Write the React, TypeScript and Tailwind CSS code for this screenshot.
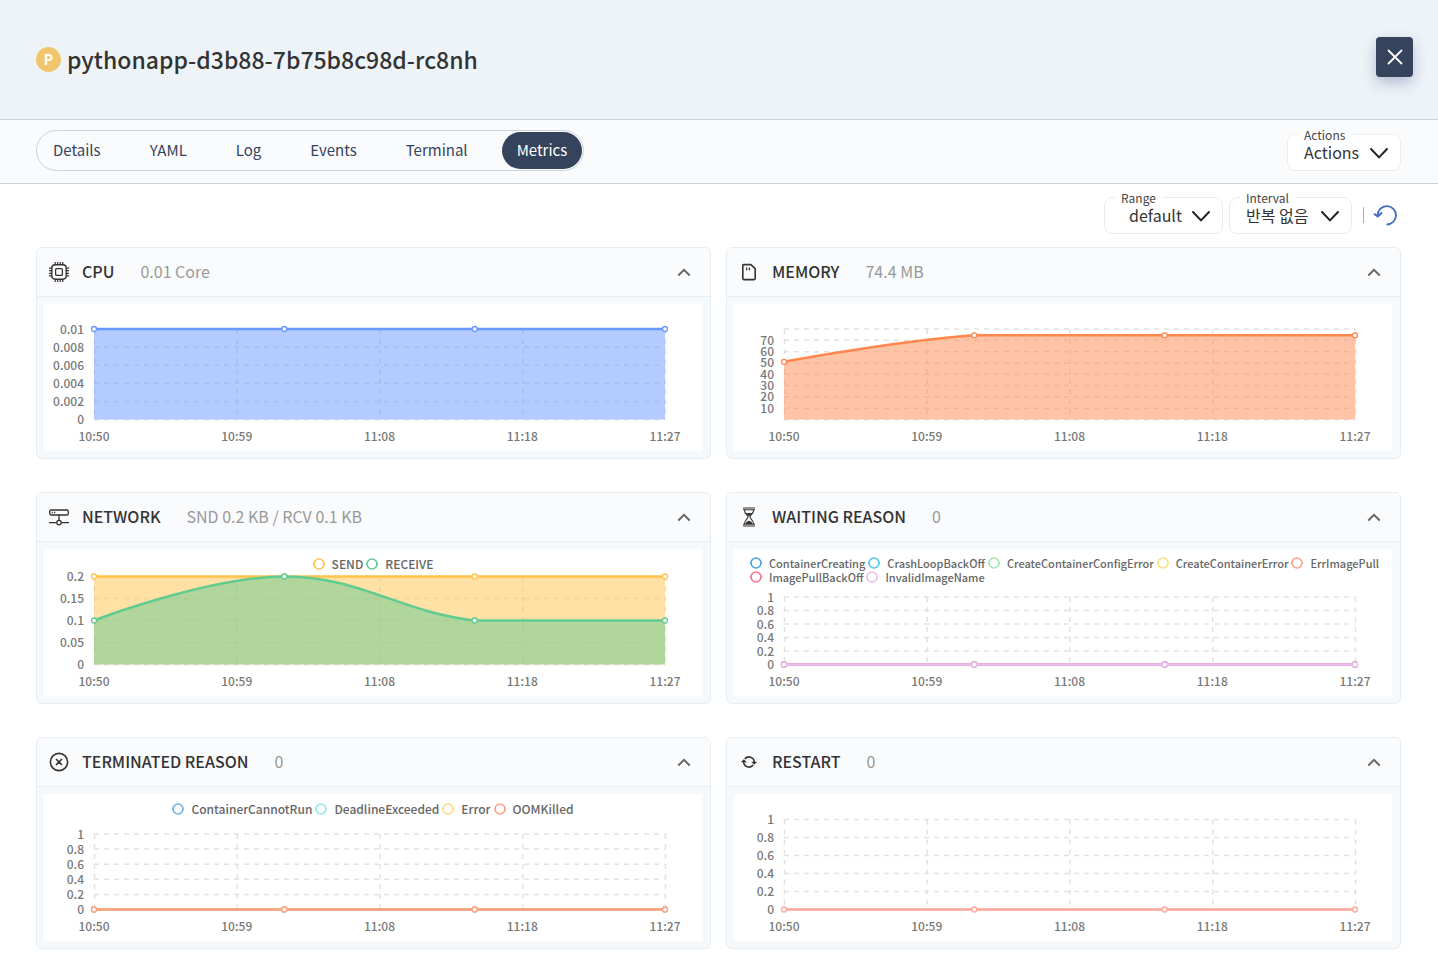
import type { ReactNode } from 'react';

type Point = [number, number];

interface Series {
  name: string;
  color: string;
  values: number[];
}

interface Metric {
  title: string;
  value: string;
  icon: ReactNode;
  series: Series[];
  ticks: string[];
  max: number;
  plotTop: number;
  legend?: 'single' | 'wrapped';
}

const TABS = ['Details', 'YAML', 'Log', 'Events', 'Terminal', 'Metrics'];
const TIMES = ['10:50', '10:59', '11:08', '11:18', '11:27'];
const ZERO = [0, 0, 0, 0];

const WIDTH = 658;
const HEIGHT = 147;
const LEFT = 50;
const RIGHT = 621;
const BOTTOM = 115.5;

function CpuIcon() {
  return (
    <svg viewBox="0 0 20 20" className="size-5" fill="none" stroke="currentColor">
      <rect x="2.8" y="2.8" width="14.4" height="14.4" rx="3.4" strokeWidth="1.4" />
      <rect x="6.6" y="6.6" width="6.8" height="6.8" rx="1.2" strokeWidth="1.3" />
      <path
        strokeWidth="1.2"
        d="M6.2 0v3M8.7 0v3M11.3 0v3M13.8 0v3M6.2 17v3M8.7 17v3M11.3 17v3M13.8 17v3M0 6.2h3M0 8.7h3M0 11.3h3M0 13.8h3M17 6.2h3M17 8.7h3M17 11.3h3M17 13.8h3"
      />
    </svg>
  );
}

function MemoryIcon() {
  return (
    <svg viewBox="0 0 20 20" className="size-5" fill="none" stroke="currentColor" strokeWidth="1.6">
      <path strokeLinejoin="round" d="M4.6 2.6h7.2l4.4 4v10a1 1 0 0 1-1 1H4.8a1 1 0 0 1-1-1V3.4a.8.8 0 0 1 .8-.8z" />
      <path strokeWidth="1.3" d="M7.6 5.6v2.6M10.4 5.6v2.6" />
    </svg>
  );
}

function NetworkIcon() {
  return (
    <svg viewBox="0 0 20 20" className="size-5" fill="none" stroke="currentColor" strokeWidth="1.3">
      <rect x=".7" y="3" width="18.6" height="5" rx="1.6" />
      <path d="M2.6 5.5h1.2M5 5.5h1.2M10 8v5.4M0 15.6h7.6M12.4 15.6H20" />
      <circle cx="10" cy="15.6" r="2.2" />
    </svg>
  );
}

function HourglassIcon() {
  return (
    <svg viewBox="0 0 20 20" className="size-5" fill="none" stroke="currentColor" strokeWidth="1.1">
      <path d="M4 1h12M4 2.8h12M4 17.2h12M4 19h12" />
      <path d="M5.4 3c0 4 3.6 4.8 3.6 7s-3.6 3-3.6 7M14.6 3c0 4-3.6 4.8-3.6 7s3.6 3 3.6 7" />
      <path
        fill="currentColor"
        stroke="none"
        d="M6.6 6h6.8L10 9.4zM6.4 17c.4-2 2-2.6 3.6-3.2 1.6.6 3.2 1.2 3.6 3.2z"
      />
    </svg>
  );
}

function TerminatedIcon() {
  return (
    <svg viewBox="0 0 20 20" className="size-5" fill="none" stroke="currentColor" strokeWidth="1.6">
      <circle cx="10" cy="10" r="8.6" />
      <path d="M7 7l6 6M13 7l-6 6" />
    </svg>
  );
}

function RestartIcon() {
  return (
    <svg viewBox="0 0 20 20" className="size-5" fill="none" stroke="currentColor" strokeWidth="1.6">
      <path d="M5.8 7a5.3 5.3 0 0 1 9.5 3.2M14.2 13a5.3 5.3 0 0 1-9.5-3.2" />
      <path fill="currentColor" stroke="none" d="M12.2 9.8h6l-3 3zM7.8 10.2h-6l3-3z" />
    </svg>
  );
}

const METRICS: Metric[] = [
  {
    title: 'CPU',
    value: '0.01 Core',
    icon: <CpuIcon />,
    series: [{ name: 'CPU', color: '#6997ff', values: [0.01, 0.01, 0.01, 0.01] }],
    ticks: ['0', '0.002', '0.004', '0.006', '0.008', '0.01'],
    max: 0.01,
    plotTop: 25,
  },
  {
    title: 'MEMORY',
    value: '74.4 MB',
    icon: <MemoryIcon />,
    series: [{ name: 'MEMORY', color: '#ff874d', values: [51, 74.4, 74.4, 74.4] }],
    ticks: ['', '10', '20', '30', '40', '50', '60', '70', ''],
    max: 80,
    plotTop: 25,
  },
  {
    title: 'NETWORK',
    value: 'SND 0.2 KB / RCV 0.1 KB',
    icon: <NetworkIcon />,
    series: [
      { name: 'SEND', color: '#ffc34b', values: [0.2, 0.2, 0.2, 0.2] },
      { name: 'RECEIVE', color: '#61cb91', values: [0.1, 0.2, 0.1, 0.1] },
    ],
    ticks: ['0', '0.05', '0.1', '0.15', '0.2'],
    max: 0.2,
    plotTop: 27.5,
    legend: 'single',
  },
  {
    title: 'WAITING REASON',
    value: '0',
    icon: <HourglassIcon />,
    series: [
      { name: 'ContainerCreating', color: '#4da3dc', values: ZERO },
      { name: 'CrashLoopBackOff', color: '#4fc8e8', values: ZERO },
      { name: 'CreateContainerConfigError', color: '#9fe6b4', values: ZERO },
      { name: 'CreateContainerError', color: '#ffdd7a', values: ZERO },
      { name: 'ErrImagePull', color: '#ff9f8a', values: ZERO },
      { name: 'ImagePullBackOff', color: '#fb7293', values: ZERO },
      { name: 'InvalidImageName', color: '#e6bcf3', values: ZERO },
    ],
    ticks: ['0', '0.2', '0.4', '0.6', '0.8', '1'],
    max: 1,
    plotTop: 48,
    legend: 'wrapped',
  },
  {
    title: 'TERMINATED REASON',
    value: '0',
    icon: <TerminatedIcon />,
    series: [
      { name: 'ContainerCannotRun', color: '#6bb5ea', values: ZERO },
      { name: 'DeadlineExceeded', color: '#8ee8ea', values: ZERO },
      { name: 'Error', color: '#ffdb7a', values: ZERO },
      { name: 'OOMKilled', color: '#ff9f82', values: ZERO },
    ],
    ticks: ['0', '0.2', '0.4', '0.6', '0.8', '1'],
    max: 1,
    plotTop: 40,
    legend: 'single',
  },
  {
    title: 'RESTART',
    value: '0',
    icon: <RestartIcon />,
    series: [{ name: 'RESTART', color: '#ffa599', values: ZERO }],
    ticks: ['0', '0.2', '0.4', '0.6', '0.8', '1'],
    max: 1,
    plotTop: 25.5,
  },
];

// Cubic spline whose control points never leave the y range of their segment
function smoothPath(points: Point[]) {
  const k = 0.2;
  const clamp = (v: number, a: number, b: number) =>
    Math.min(Math.max(v, Math.min(a, b)), Math.max(a, b));

  return points.reduce((path, [x, y], i) => {
    if (i === 0) return `M${x} ${y}`;
    const [px, py] = points[i - 1];
    const before = points[i - 2] ?? [x, y];
    const after = points[i + 1] ?? [px, py];
    const c1x = px + k * (x - before[0]);
    const c1y = py + k * (y - before[1]);
    const c2x = x - k * (after[0] - px);
    const c2y = y - k * (after[1] - py);
    return `${path} C${c1x} ${clamp(c1y, y, py)} ${c2x} ${clamp(c2y, y, py)} ${x} ${y}`;
  }, '');
}

function Legend({ series, wrapped }: { series: Series[]; wrapped: boolean }) {
  return (
    <ul
      className={
        wrapped
          ? 'flex flex-wrap gap-x-[3px] pt-[7px] pl-4 text-[11px] leading-[14px] font-medium'
          : 'flex justify-center gap-x-[3px] pt-2 text-[12px] leading-[14px] font-medium'
      }
    >
      {series.map((s) => (
        <li key={s.name} className="flex items-center gap-[7px] text-[#666]">
          <svg viewBox="0 0 12 12" className="size-3" fill="#fff" stroke={s.color} strokeWidth="1.6">
            <circle cx="6" cy="6" r="5" />
            <path d="M0 6h1M11 6h1" />
          </svg>
          {s.name}
        </li>
      ))}
    </ul>
  );
}

function Chart({ metric }: { metric: Metric }) {
  const { series, ticks, max, plotTop, legend } = metric;
  const legendHeight = legend === 'wrapped' ? 35 : legend === 'single' ? 22 : 0;
  const plotHeight = BOTTOM - plotTop;
  const tickY = (i: number) => BOTTOM - (plotHeight * i) / (ticks.length - 1);

  return (
    <div className="bg-white">
      {legend && <Legend series={series} wrapped={legend === 'wrapped'} />}
      <svg
        viewBox={`0 ${legendHeight} ${WIDTH} ${HEIGHT - legendHeight}`}
        className="block h-auto w-full overflow-visible"
        role="img"
        aria-label={metric.title}
      >
        <g stroke="#e2e2e2" strokeWidth="1.5" strokeDasharray="5 5">
          {ticks.map((_, i) => (
            <line key={i} x1={LEFT} x2={RIGHT} y1={tickY(i)} y2={tickY(i)} />
          ))}
          {TIMES.map((time, i) => {
            const x = LEFT + ((RIGHT - LEFT) * i) / 4 + 0.5;
            return <line key={time} x1={x} x2={x} y1={plotTop} y2={BOTTOM} />;
          })}
        </g>
        <g fill="#777" className="text-[12px] font-medium">
          {ticks.map((tick, i) => (
            <text key={i} x="40" y={tickY(i) + 4.5} textAnchor="end">
              {tick}
            </text>
          ))}
          {TIMES.map((time, i) => (
            <text key={time} x={LEFT + ((RIGHT - LEFT) * i) / 4} y="137" textAnchor="middle">
              {time}
            </text>
          ))}
        </g>
        {series.map((s) => {
          const points = s.values.map(
            (v, i): Point => [LEFT + ((RIGHT - LEFT) * i) / 3, BOTTOM - (plotHeight * v) / max],
          );
          const line = smoothPath(points);
          return (
            <g key={s.name}>
              <path d={`${line} L${RIGHT} ${BOTTOM} L${LEFT} ${BOTTOM} Z`} fill={s.color} fillOpacity="0.5" />
              <path d={line} fill="none" stroke={s.color} strokeWidth="2.5" />
              {points.map(([x, y]) => (
                <circle key={x} cx={x} cy={y} r="2.5" fill="#fff" stroke={s.color} strokeWidth="1.3" />
              ))}
            </g>
          );
        })}
      </svg>
    </div>
  );
}

function MetricCard({ metric }: { metric: Metric }) {
  return (
    <section className="overflow-hidden rounded-md border border-[#e6edf3] bg-[#f5f9fc]">
      <header className="flex h-[49px] items-center border-b border-[#e6edf3] bg-[#fafbfd] pr-4 pl-3 text-[#333]">
        {metric.icon}
        <h2 className="ml-[13px] pb-0.5 text-[16px] font-medium">{metric.title}</h2>
        <span className="ml-[26px] pb-0.5 text-[16px] text-[#999]">{metric.value}</span>
        <button type="button" aria-label={`Collapse ${metric.title}`} className="ml-auto cursor-pointer text-[#666]">
          <svg viewBox="0 0 20 20" className="size-5" fill="none" stroke="currentColor" strokeWidth="2">
            <path d="M4.3 13.5L10 7.8l5.7 5.7" />
          </svg>
        </button>
      </header>
      <div className="p-[7px] pr-2">
        <Chart metric={metric} />
      </div>
    </section>
  );
}

function SelectBox({ id, label, value, className }: { id: string; label: string; value: string; className: string }) {
  return (
    <fieldset className="relative rounded-lg border border-[#ececec] bg-white">
      <legend className="ml-[10px] px-1.5 pt-0.5 text-[12px] leading-3 text-[#444]">
        <label htmlFor={id}>{label}</label>
      </legend>
      <select
        id={id}
        defaultValue={value}
        className={`mb-[7px] block h-[22px] appearance-none bg-transparent pr-10 text-[16px] leading-[22px] text-[#333] ${className}`}
      >
        <option>{value}</option>
      </select>
      <svg
        viewBox="0 0 20 20"
        className="pointer-events-none absolute right-[11px] bottom-[7px] size-5"
        fill="none"
        stroke="#222"
        strokeWidth="2"
        strokeLinecap="round"
      >
        <path d="M2 6l8 8.4L18 6" />
      </svg>
    </fieldset>
  );
}

export default function App() {
  return (
    <div className="min-h-screen bg-white font-['Noto_Sans_CJK_KR',sans-serif] text-[#333]">
      <header className="flex h-[120px] items-center border-b border-[#cbd3dc] bg-[#eef3f8] pr-[25px] pl-9">
        <span className="flex size-[25px] items-center justify-center rounded-full bg-[#efc66b] text-[14px] font-bold text-white">
          P
        </span>
        <h1 className="ml-1.5 text-[23px] font-medium">pythonapp-d3b88-7b75b8c98d-rc8nh</h1>
        <button
          type="button"
          aria-label="Close"
          className="mb-[5px] ml-auto flex h-10 w-[37px] cursor-pointer items-center justify-center rounded bg-[#36435c] text-white shadow-[0_6px_14px_rgba(54,67,120,0.3)]"
        >
          <svg viewBox="0 0 16 16" className="size-4" fill="none" stroke="currentColor" strokeWidth="1.8" strokeLinecap="round">
            <path d="M1.5 1.5l13 13M14.5 1.5l-13 13" />
          </svg>
        </button>
      </header>

      <div className="flex h-16 items-end justify-between border-b border-[#cbd3dc] bg-[#fafbfd] pr-[37px] pb-3 pl-9">
        <nav className="flex gap-[19px] rounded-full border border-[#cbd3dc] p-px">
          {TABS.map((tab) => (
            <button
              key={tab}
              type="button"
              className={
                tab === 'Metrics'
                  ? 'h-[37px] cursor-pointer rounded-full bg-[#36435c] px-[15px] text-[15px] text-white'
                  : 'h-[37px] cursor-pointer rounded-full px-[15px] text-[15px] text-[#36435c]'
              }
            >
              {tab}
            </button>
          ))}
        </nav>
        <SelectBox id="actions" label="Actions" value="Actions" className="pl-4" />
      </div>

      <main className="px-9 pt-[6px] pr-[37px] pb-6">
        <div className="mb-[13px] flex items-center justify-end">
          <SelectBox id="range" label="Range" value="default" className="pl-6" />
          <div className="w-1.5" />
          <SelectBox id="interval" label="Interval" value="반복 없음" className="w-[121px] pl-4" />
          <span className="mt-1.5 ml-[11px] h-4 w-px bg-[#aaa]" />
          <button type="button" aria-label="Refresh" className="mt-1.5 mr-0.5 ml-[9px] cursor-pointer text-[#3f6cc0]">
            <svg viewBox="0 0 26 24" className="h-6 w-[26px]" fill="none" stroke="currentColor" strokeWidth="1.8">
              <path d="M4.6 12.5a9.2 9.2 0 1 1 8.9 9" />
              <path strokeWidth="2" d="M1 10.8l3.700 2.700 4.300-4" />
            </svg>
          </button>
        </div>

        <div className="grid grid-cols-2 gap-x-[15px] gap-y-[33px]">
          {METRICS.map((metric) => (
            <MetricCard key={metric.title} metric={metric} />
          ))}
        </div>
      </main>
    </div>
  );
}
